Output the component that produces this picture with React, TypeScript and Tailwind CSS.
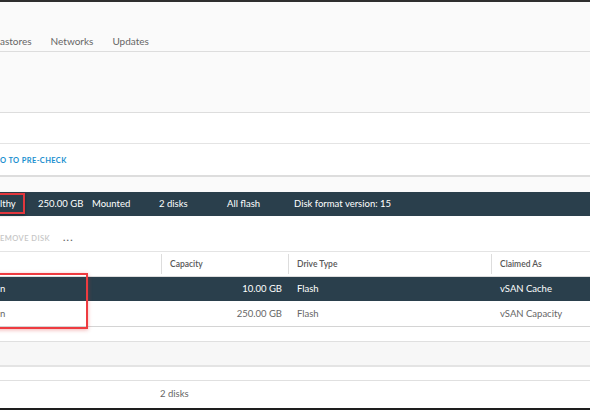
import React from "react";

const font = { fontFamily: "Lato, 'Open Sans', sans-serif" };

export default function App() {
  return (
    <div className="relative w-[590px] h-[410px] overflow-hidden bg-white text-[#565656]" style={font}>
      {/* top border */}
      <div className="h-[2px] bg-[#2e2e2e]" />
      {/* tabs */}
      <div className="h-[49px] bg-[#fafafa] flex items-end">
        <div className="flex gap-[19px] text-[10px] text-[#666] pb-[1px] h-[18px] items-center">
          <span>astores</span>
          <span>Networks</span>
          <span>Updates</span>
        </div>
      </div>
      <div className="h-px bg-[#dddddd]" />
      <div className="h-[60px] bg-[#fafafa]" />
      <div className="h-px bg-[#dddddd]" />
      <div className="h-[30px] bg-white" />
      <div className="h-px bg-[#e4e4e4]" />
      <div className="h-[31px] flex items-center pt-[2px] text-[7.5px] font-bold tracking-[0.05em] text-[#1a8fcf]">
        O TO PRE-CHECK
      </div>
      <div className="h-[2px] bg-[#dddddd]" />
      <div className="h-[15px] bg-[#fafafa]" />
      {/* summary dark row */}
      <div className="h-[24px] bg-[#2a3f4c] text-white text-[9.5px] font-normal flex items-center">
        <span className="w-[38px]">lthy</span>
        <span className="w-[54px]">250.00 GB</span>
        <span className="w-[67px]">Mounted</span>
        <span className="w-[68px]">2 disks</span>
        <span className="w-[67px]">All flash</span>
        <span>Disk format version: 15</span>
      </div>
      {/* actions */}
      <div className="h-[35px] flex items-center pt-[11px] text-[7.5px] font-semibold tracking-[0.06em]">
        <span className="text-[#c6c6c6] w-[63px]">EMOVE DISK</span>
        <span className="text-[#666] text-[10px] font-bold leading-none -mt-[5px] tracking-[0.12em]">...</span>
      </div>
      <div className="h-px bg-[#e4e4e4]" />
      {/* table header */}
      <div className="h-[24px] grid grid-cols-[162px_127px_203px_1fr] text-[8.5px] font-semibold text-[#565656]">
        <div className="border-r border-[#dddddd] my-[2px]" />
        <div className="flex items-center pl-[8px] border-r border-[#dddddd] my-[2px]">Capacity</div>
        <div className="flex items-center pl-[8px] border-r border-[#dddddd] my-[2px]">Drive Type</div>
        <div className="flex items-center pl-[8px]">Claimed As</div>
      </div>
      <div className="h-px bg-[#dddddd]" />
      <div className="h-[24px] bg-[#2a3f4c] text-white text-[9.5px] grid grid-cols-[162px_127px_203px_1fr] pt-px">
        <div className="flex items-center">n</div>
        <div className="flex items-center justify-end pr-[7px]">10.00 GB</div>
        <div className="flex items-center pl-[8px]">Flash</div>
        <div className="flex items-center pl-[8px]">vSAN Cache</div>
      </div>
      <div className="h-[25px] bg-white text-[#666] text-[9.5px] grid grid-cols-[162px_127px_203px_1fr] pt-px">
        <div className="flex items-center">n</div>
        <div className="flex items-center justify-end pr-[7px]">250.00 GB</div>
        <div className="flex items-center pl-[8px]">Flash</div>
        <div className="flex items-center pl-[8px]">vSAN Capacity</div>
      </div>
      <div className="h-px bg-[#d4d4d4]" />
      <div className="h-[14px] bg-white" />
      <div className="h-px bg-[#e0e0e0]" />
      <div className="h-[23px] bg-[#f7f7f7]" />
      <div className="h-[2px] bg-[#e4e4e4]" />
      <div className="h-[13px] bg-white" />
      <div className="h-px bg-[#e0e0e0]" />
      <div className="h-[27px] flex items-center text-[9.5px] text-[#666]">
        <span className="ml-[160px]">2 disks</span>
      </div>
      <div className="h-[2px] bg-[#1e1e1e]" />

      {/* red highlight boxes */}
      <div className="absolute left-[-4px] top-[193px] w-[29px] h-[21px] border-2 border-[#e2373d] shadow-[0_1px_3px_rgba(0,0,0,0.35)]" />
      <div className="absolute left-[-4px] top-[273px] w-[92px] h-[56px] border-2 border-[#ee3b40] shadow-[0_1px_4px_rgba(220,60,60,0.4)]" />
    </div>
  );
}
